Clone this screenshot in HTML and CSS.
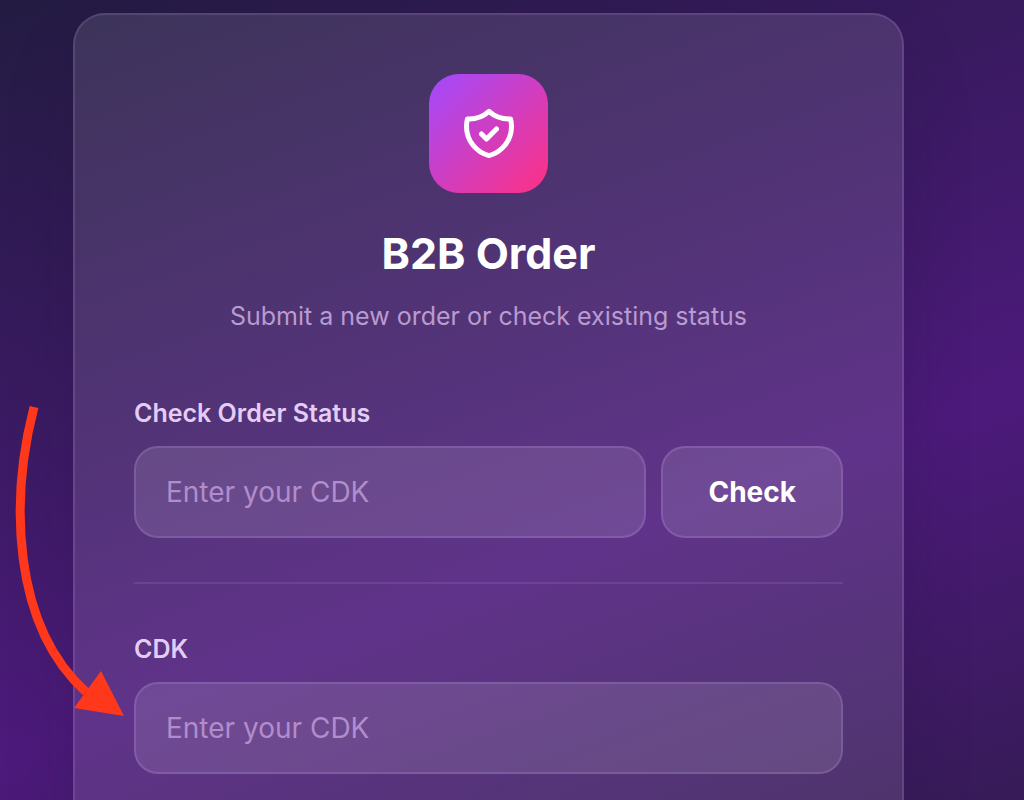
FILE: index.html
```html
<!DOCTYPE html>
<html lang="en">
<head>
<meta charset="utf-8">
<meta name="viewport" content="width=device-width, initial-scale=1">
<title>B2B Order</title>
<link rel="stylesheet" href="styles.css">
</head>
<body>
<main class="page">
  <section class="card">
    <header class="intro">
      <div class="badge">
        <svg class="badge-icon" viewBox="0 0 24 24" fill="none" stroke="currentColor" stroke-width="2" stroke-linecap="round" stroke-linejoin="round" aria-hidden="true">
          <path d="M9 12l2 2 4-4m5.618-4.016A11.955 11.955 0 0112 2.944a11.955 11.955 0 01-8.618 3.04A12.02 12.02 0 003 9c0 5.591 3.824 10.29 9 11.622 5.176-1.332 9-6.03 9-11.622 0-1.042-.133-2.052-.382-3.016z"/>
        </svg>
      </div>
      <h1 class="title">B2B Order</h1>
      <p class="subtitle">Submit a new order or check existing status</p>
    </header>
    <form class="group status">
      <label class="label" for="status-cdk">Check Order Status</label>
      <div class="row">
        <input class="field" id="status-cdk" type="text" placeholder="Enter your CDK">
        <button class="check" type="button">Check</button>
      </div>
    </form>
    <form class="group">
      <label class="label" for="order-cdk">CDK</label>
      <input class="field" id="order-cdk" type="text" placeholder="Enter your CDK">
    </form>
  </section>
  <svg class="arrow" viewBox="0 0 124 320" aria-hidden="true">
    <path class="arrow-line" d="M34 7C10 100 12 225 86 292"/>
    <path class="arrow-head" d="M101 271L124 316L74 308Z"/>
  </svg>
</main>
</body>
</html>
```
FILE: styles.css
```css
* {
  box-sizing: border-box;
}

body {
  margin: 0;
  font-family: Inter, "Liberation Sans", sans-serif;
  color: #fff;
}

.page {
  position: relative;
  display: flex;
  min-height: 100vh;
  padding: 13px 120px 0 73px;
  overflow: hidden;
  background: linear-gradient(160deg, #231b42 0%, #4d1a7c 65%, #361b57 100%);
}

.card {
  flex: 1;
  min-width: 0;
  padding: 59px 59px 24px;
  border: 2px solid rgba(215, 180, 255, 0.14);
  border-bottom: 0;
  border-radius: 32px 32px 0 0;
  background: rgba(255, 255, 255, 0.11);
  box-shadow: 0 40px 80px -16px rgba(25, 20, 40, 0.3);
}

.intro {
  display: flex;
  flex-direction: column;
  align-items: center;
  text-align: center;
}

.badge {
  display: grid;
  place-items: center;
  width: 119px;
  height: 119px;
  border-radius: 30px;
  background: linear-gradient(135deg, #a649f8 5%, #f5338f 90%);
}

.badge-icon {
  width: 60px;
  height: 60px;
}

.title {
  margin: 30px 0 0;
  font-size: 43px;
  line-height: 60px;
  font-weight: 700;
}

.subtitle {
  margin: 13px 0 0;
  font-size: 25px;
  line-height: 40px;
  color: #b99bd0;
}

.group {
  display: flex;
  flex-direction: column;
  gap: 13px;
}

.status {
  margin: 57px 0 45px;
  padding-bottom: 44px;
  border-bottom: 2px solid rgba(215, 180, 255, 0.12);
}

.label {
  font-size: 25px;
  line-height: 40px;
  font-weight: 600;
  color: #e4cdf5;
}

.row {
  display: flex;
  gap: 15px;
}

.field,
.check {
  height: 92px;
  border: 2px solid rgba(215, 180, 255, 0.18);
  border-radius: 24px;
  background: rgba(255, 255, 255, 0.11);
  font-family: inherit;
  font-size: 28px;
  color: #fff;
}

.field {
  flex: 1 0 auto;
  width: 100%;
  padding: 0 30px;
}

.row .field {
  flex: 1;
  min-width: 0;
}

.field::placeholder {
  color: #b18dcb;
  opacity: 1;
}

.check {
  padding: 0 45px;
  font-weight: 700;
}

.arrow {
  position: absolute;
  top: 400px;
  left: 0;
  width: 124px;
  height: 320px;
}

.arrow-line {
  fill: none;
  stroke: #ff381b;
  stroke-width: 9;
}

.arrow-head {
  fill: #ff381b;
}
```
